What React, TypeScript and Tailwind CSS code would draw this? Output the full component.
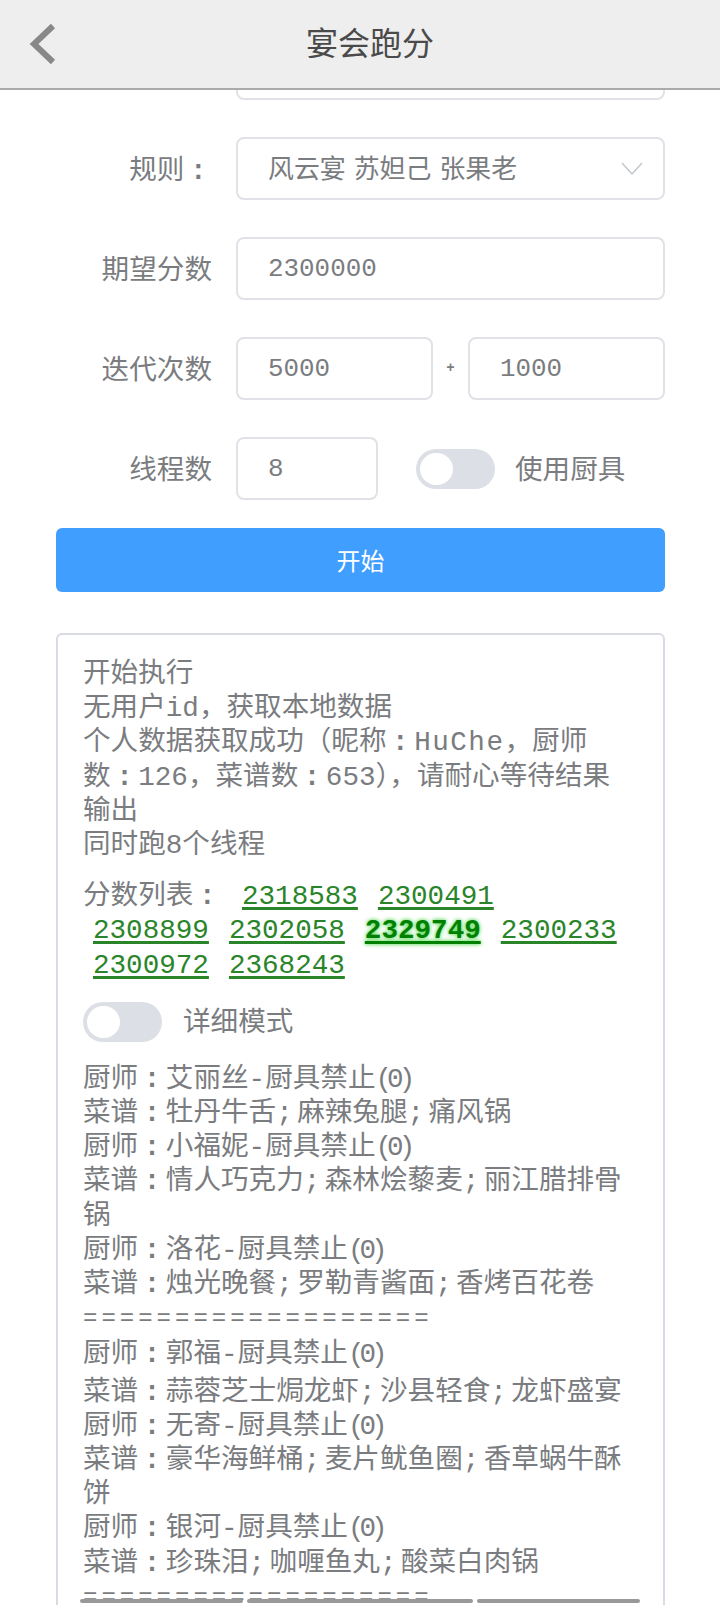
const scores = ["2308899", "2302058", "2329749", "2300233", "2300972", "2368243"];

const groups = [
  [
    ["艾丽丝", "牡丹牛舌", "麻辣兔腿", "痛风锅"],
    ["小福妮", "情人巧克力", "森林烩藜麦", "丽江腊排骨锅"],
    ["洛花", "烛光晚餐", "罗勒青酱面", "香烤百花卷"],
  ],
  [
    ["郭福", "蒜蓉芝士焗龙虾", "沙县轻食", "龙虾盛宴"],
    ["无寄", "豪华海鲜桶", "麦片鱿鱼圈", "香草蜗牛酥饼"],
    ["银河", "珍珠泪", "咖喱鱼丸", "酸菜白肉锅"],
  ],
];

// full width colon, centred in its box like the original font draws it
function Colon() {
  return <span className="inline-block w-[27.6px] text-center font-bold">:</span>;
}

function Row({ label, children }: { label: React.ReactNode; children: React.ReactNode }) {
  return (
    <div className="mb-[37px] flex h-[63px] items-center gap-[24px]">
      <label className="w-[156px] shrink-0 pt-[7px] text-right">{label}</label>
      {children}
    </div>
  );
}

function Field({ value, className = "" }: { value: string; className?: string }) {
  return (
    <input
      readOnly
      value={value}
      className={`h-[63px] rounded-[8px] border-2 border-[#e0e2e8] bg-white pl-[30px] text-[25.9px] text-[#7a7c80] outline-none ${className}`}
    />
  );
}

function Toggle() {
  return (
    <div className="flex h-[40px] w-[79px] shrink-0 items-center rounded-full bg-[#dcdfe6] pl-[4px]">
      <div className="h-[32px] w-[33px] rounded-full bg-white" />
    </div>
  );
}

function Score({ value }: { value: string }) {
  const best = value === "2329749";
  return (
    <a
      className={`mx-[10px] inline-block leading-[34px] underline decoration-[3px] underline-offset-[3px] ${
        best
          ? "font-bold text-[#008000] [text-shadow:0_0_4px_#22cc22]"
          : "text-[#2a852a]"
      }`}
    >
      {value}
    </a>
  );
}

export default function App() {
  return (
    <div className="relative h-[1605px] w-[720px] overflow-hidden bg-white font-['Liberation_Mono','Noto_Sans_CJK_SC',monospace] text-[27.6px] leading-[34.2px] text-[#7a7c80]">
      <header className="relative z-10 flex h-[90px] items-center justify-center border-b-2 border-[#aaaaaa] bg-[#eeeeee] pt-[6px] pl-[20px] text-[32px] text-[#4a4a4a]">
        <svg
          aria-hidden="true"
          viewBox="0 0 40 60"
          fill="none"
          className="absolute top-[14px] left-[21px] h-[60px] w-[40px]"
        >
          <polyline points="32,12 13,30 32,48" stroke="#888888" strokeWidth="6" />
        </svg>
        宴会跑分
      </header>

      <main className="-mt-[53px] pr-[55px] pl-[56px]">
        <Row label="">
          <Field value="" className="min-w-0 flex-1" />
        </Row>

        <Row
          label={
            <>
              规则
              <Colon />
            </>
          }
        >
          <div className="flex h-[63px] flex-1 items-center justify-between rounded-[8px] border-2 border-[#e0e2e8] pr-[20px] pl-[30px] text-[25.9px]">
            <span className="pt-[6px] [word-spacing:-7.5px]">风云宴 苏妲己 张果老</span>
            <svg aria-hidden="true" viewBox="0 0 22 14" fill="none" className="h-[14px] w-[22px]">
              <polyline points="1,1 11,12 21,1" stroke="#c0c4cc" strokeWidth="1.4" />
            </svg>
          </div>
        </Row>

        <Row label="期望分数">
          <Field value="2300000" className="min-w-0 flex-1" />
        </Row>

        <Row label="迭代次数">
          <Field value="5000" className="w-[197px]" />
          <span className="-mx-[24px] w-[37px] self-start pt-[14px] text-center text-[14px] font-bold">+</span>
          <Field value="1000" className="w-[197px]" />
        </Row>

        <Row label="线程数">
          <Field value="8" className="w-[142px]" />
          <div className="ml-[14px] flex items-center gap-[20px] pt-[1px]">
            <Toggle />
            <span className="pt-[7px]">使用厨具</span>
          </div>
        </Row>

        <button
          type="button"
          className="-mt-[9px] block h-[64px] w-full rounded-[6px] bg-[#409eff] pt-[8px] text-[24px] text-white"
        >
          开始
        </button>

        <section className="mt-[41px] rounded-[6px] border-2 border-[#d8dbe4] pt-[23px] pr-[24px] pl-[25px]">
          <p>开始执行</p>
          <p>无用户id，获取本地数据</p>
          <p>
            个人数据获取成功（昵称
            <Colon />
            <span className="tracking-[1.5px]">HuChe</span>，厨师
            <br />
            数<Colon />
            126，菜谱数
            <Colon />
            653），请耐心等待结果
            <br />
            输出
          </p>
          <p>同时跑8个线程</p>

          <div className="mt-[17px]">
            <span className="mr-[11px]">
              分数列表
              <Colon />
            </span>
            <Score value="2318583" />
            <Score value="2300491" />
            {scores.map((score) => (
              <Score key={score} value={score} />
            ))}
          </div>

          <div className="mt-[19px] flex items-center gap-[21px]">
            <Toggle />
            <span className="pt-[4px]">详细模式</span>
          </div>

          {groups.map((group, i) => (
            <div key={i} className={i === 0 ? "mt-[21px]" : "mt-[2px]"}>
              {group.map(([chef, a, b, c]) => (
                <div key={chef}>
                  <p>
                    厨师
                    <Colon />
                    {chef}-厨具禁止<span className="tracking-[-5px]">(0)</span>
                  </p>
                  <p className={chef === "郭福" ? "mt-[3px]" : ""}>
                    菜谱
                    <Colon />
                    {a}
                    <span className="tracking-[4.4px]">;</span>
                    {b}
                    <span className="tracking-[4.4px]">;</span>
                    {c}
                  </p>
                </div>
              ))}
              <p className="text-[24px] tracking-[4px]">===================</p>
            </div>
          ))}
        </section>
      </main>

      {/* page's horizontal scroll bar */}
      <div className="absolute top-[1599px] left-[80px] flex h-[4px] gap-[4px]">
        <div className="w-[163px] rounded-full bg-[#999999]" />
        <div className="w-[226px] rounded-full bg-[#999999]" />
        <div className="w-[163px] rounded-full bg-[#999999]" />
      </div>
    </div>
  );
}
